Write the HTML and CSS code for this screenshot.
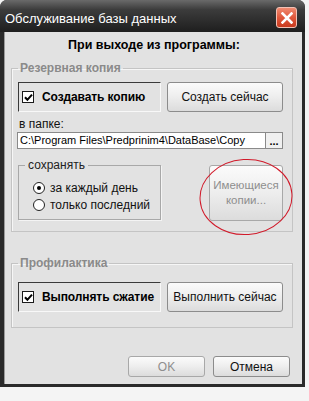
FILE: index.html
```html
<!DOCTYPE html>
<html lang="ru">
<head>
<meta charset="utf-8">
<link rel="stylesheet" href="styles.css">
</head>
<body>
<div class="window">
  <div class="titlebar">
    <span class="title">Обслуживание базы данных</span>
    <span class="close"><svg width="12" height="12" viewBox="0 0 12 12"><path d="M1.5 1.5 L10.5 10.5 M10.5 1.5 L1.5 10.5" stroke="#fff" stroke-width="2.6" stroke-linecap="square"/></svg></span>
  </div>
  <div class="client">
    <div class="heading">При выходе из программы:</div>
    <fieldset class="group g1">
      <legend class="glegend">Резервная копия</legend>
      <div class="row">
        <div class="checkpanel"><span class="cb"><svg width="9" height="9" viewBox="0 0 9 9"><path d="M1 4.2 L3.4 6.8 L8 1.6" fill="none" stroke="#000" stroke-width="2"/></svg></span>Создавать копию</div>
        <button class="btn action">Создать сейчас</button>
      </div>
      <div class="folder-label">в папке:</div>
      <div class="pathrow">
        <div class="path">C:\Program Files\Predprinim4\DataBase\Copy</div>
        <button class="browse">...</button>
      </div>
      <div class="row row3">
        <fieldset class="inner">
          <legend class="ilegend">сохранять</legend>
          <div class="radio"><span class="rb on"></span>за каждый день</div>
          <div class="radio"><span class="rb"></span>только последний</div>
        </fieldset>
        <div class="copies">
          <button class="btn tall disabled">Имеющиеся<br>копии...</button>
          <svg class="ring" width="96" height="80" viewBox="0 0 96 80"><ellipse cx="47" cy="39" rx="46" ry="37.5" fill="none" stroke="#d11a2a" stroke-width="1" transform="rotate(-4 47 39)"/></svg>
        </div>
      </div>
    </fieldset>
    <fieldset class="group g2">
      <legend class="glegend">Профилактика</legend>
      <div class="row">
        <div class="checkpanel"><span class="cb"><svg width="9" height="9" viewBox="0 0 9 9"><path d="M1 4.2 L3.4 6.8 L8 1.6" fill="none" stroke="#000" stroke-width="2"/></svg></span>Выполнять сжатие</div>
        <button class="btn action">Выполнить сейчас</button>
      </div>
    </fieldset>
    <div class="footer">
      <button class="btn foot disabled">OK</button>
      <button class="btn foot">Отмена</button>
    </div>
  </div>
</div>
</body>
</html>
```

FILE: styles.css
```css
* { box-sizing: border-box; }
html, body { margin: 0; padding: 0; }
body {
  background: #f4f4f4;
  width: 309px;
  height: 401px;
  overflow: hidden;
  font-family: "Liberation Sans", Arial, sans-serif;
  font-size: 12px;
  color: #000;
}
.window {
  width: 305px;
  height: 387px;
  background: #2a2a2a;
  border-radius: 7px 7px 0 0;
  display: flex;
  flex-direction: column;
}
.titlebar {
  height: 32px;
  flex: none;
  border-radius: 7px 7px 0 0;
  background: linear-gradient(#6a6a6a 0%, #3c3c3c 30%, #1e1e1e 100%);
  display: flex;
  align-items: center;
  padding: 0 8px 0 5px;
  justify-content: space-between;
}
.title {
  color: #fff;
  font-size: 13px;
  margin-top: 4px;
}
.close {
  width: 21px;
  height: 21px;
  margin-top: 3px;
  border-radius: 3px;
  border: 1px solid #f2c2b6;
  background: linear-gradient(#f08a70 0%, #e0583c 50%, #c83a1e 100%);
  display: flex;
  align-items: center;
  justify-content: center;
}
.client {
  flex: 1;
  margin: 0 3px 3px 4px;
  background: #e2e2e2;
  border-left: 1px solid #9a9a9a;
  padding: 6px 9px 0 6px;
}
.heading {
  text-align: center;
  font-weight: bold;
  font-size: 12.5px;
  line-height: 14px;
  padding-left: 4px;
}
.group {
  margin: 9px 0 0 0;
  padding: 0 0 0 6px;
  border: 1px solid #c4c4c4;
  box-shadow: inset 1px 1px 0 #f6f6f6;
  min-width: 0;
}
.glegend {
  font-weight: bold;
  color: #8a8a8a;
  line-height: 14px;
  padding: 0 2px;
}
.g1 { padding-bottom: 10px; }
.g2 { margin-top: 24px; padding-bottom: 15px; }
.row {
  display: flex;
  gap: 6px;
  margin-top: 7px;
}
.g2 .row { margin-top: 12px; }
.checkpanel {
  width: 143px;
  height: 30px;
  border-top: 1px solid #3a3a3a;
  border-left: 1px solid #3a3a3a;
  border-right: 1px solid #f8f8f8;
  border-bottom: 1px solid #f8f8f8;
  display: flex;
  align-items: center;
  padding-left: 3px;
  font-weight: bold;
  font-size: 12px;
  white-space: nowrap;
  letter-spacing: -0.1px;
}
.cb {
  flex: none;
  width: 12px;
  height: 12px;
  border: 1px solid #1a1a1a;
  background: #fff;
  display: flex;
  align-items: center;
  justify-content: center;
  margin-right: 8px;
}
.btn {
  font-family: "Liberation Sans", Arial, sans-serif;
  font-size: 12px;
  color: #111;
  border: 1px solid #8c8c8c;
  border-radius: 3px;
  background: linear-gradient(#fbfbfb 0%, #efefef 45%, #dcdcdc 100%);
  padding: 0;
}
.action {
  width: 116px;
  height: 30px;
}
.folder-label {
  margin-top: 5px;
  line-height: 14px;
  padding-left: 1px;
  color: #111;
}
.pathrow {
  display: flex;
  margin-top: 1px;
  margin-left: -1px;
}
.path {
  width: 249px;
  height: 17px;
  border: 1px solid #8a8a8a;
  background: #fff;
  font-size: 11px;
  line-height: 15px;
  padding-left: 2px;
  white-space: nowrap;
  overflow: hidden;
}
.browse {
  width: 17px;
  height: 17px;
  border: 1px solid #8a8a8a;
  border-left: none;
  background: #f0f0f0;
  font-family: "Liberation Sans", Arial, sans-serif;
  font-weight: bold;
  font-size: 11px;
  line-height: 10px;
  padding: 0;
}
.row3 {
  margin-top: 9px;
  gap: 0;
  align-items: flex-start;
}
.inner {
  width: 143px;
  margin: 0;
  padding: 7px 0 6px 6px;
  border: 1px solid #a8a8a8;
  box-shadow: 1px 1px 0 #f4f4f4;
  min-width: 0;
}
.ilegend {
  font-weight: normal;
  line-height: 14px;
  padding: 0 3px;
  color: #222;
}
.radio {
  display: flex;
  align-items: center;
  height: 17px;
  padding-left: 8px;
  color: #111;
}
.rb {
  width: 12px;
  height: 12px;
  border: 1px solid #222;
  border-radius: 50%;
  background: #fff;
  margin-right: 5px;
  display: flex;
  align-items: center;
  justify-content: center;
}
.rb.on::after {
  content: "";
  width: 4px;
  height: 4px;
  border-radius: 50%;
  background: #000;
}
.copies {
  position: relative;
  margin-left: 48px;
  margin-top: 7px;
}
.tall {
  width: 74px;
  height: 56px;
  font-size: 11.5px;
  line-height: 15px;
}
.disabled {
  color: #8e8e8e;
  border-color: #a8a8a8;
}
.ring {
  position: absolute;
  left: -10px;
  top: -7px;
  pointer-events: none;
}
.footer {
  display: flex;
  justify-content: flex-end;
  gap: 8px;
  margin-top: 28px;
  padding-right: 3px;
}
.foot {
  width: 77px;
  height: 21px;
}
```
